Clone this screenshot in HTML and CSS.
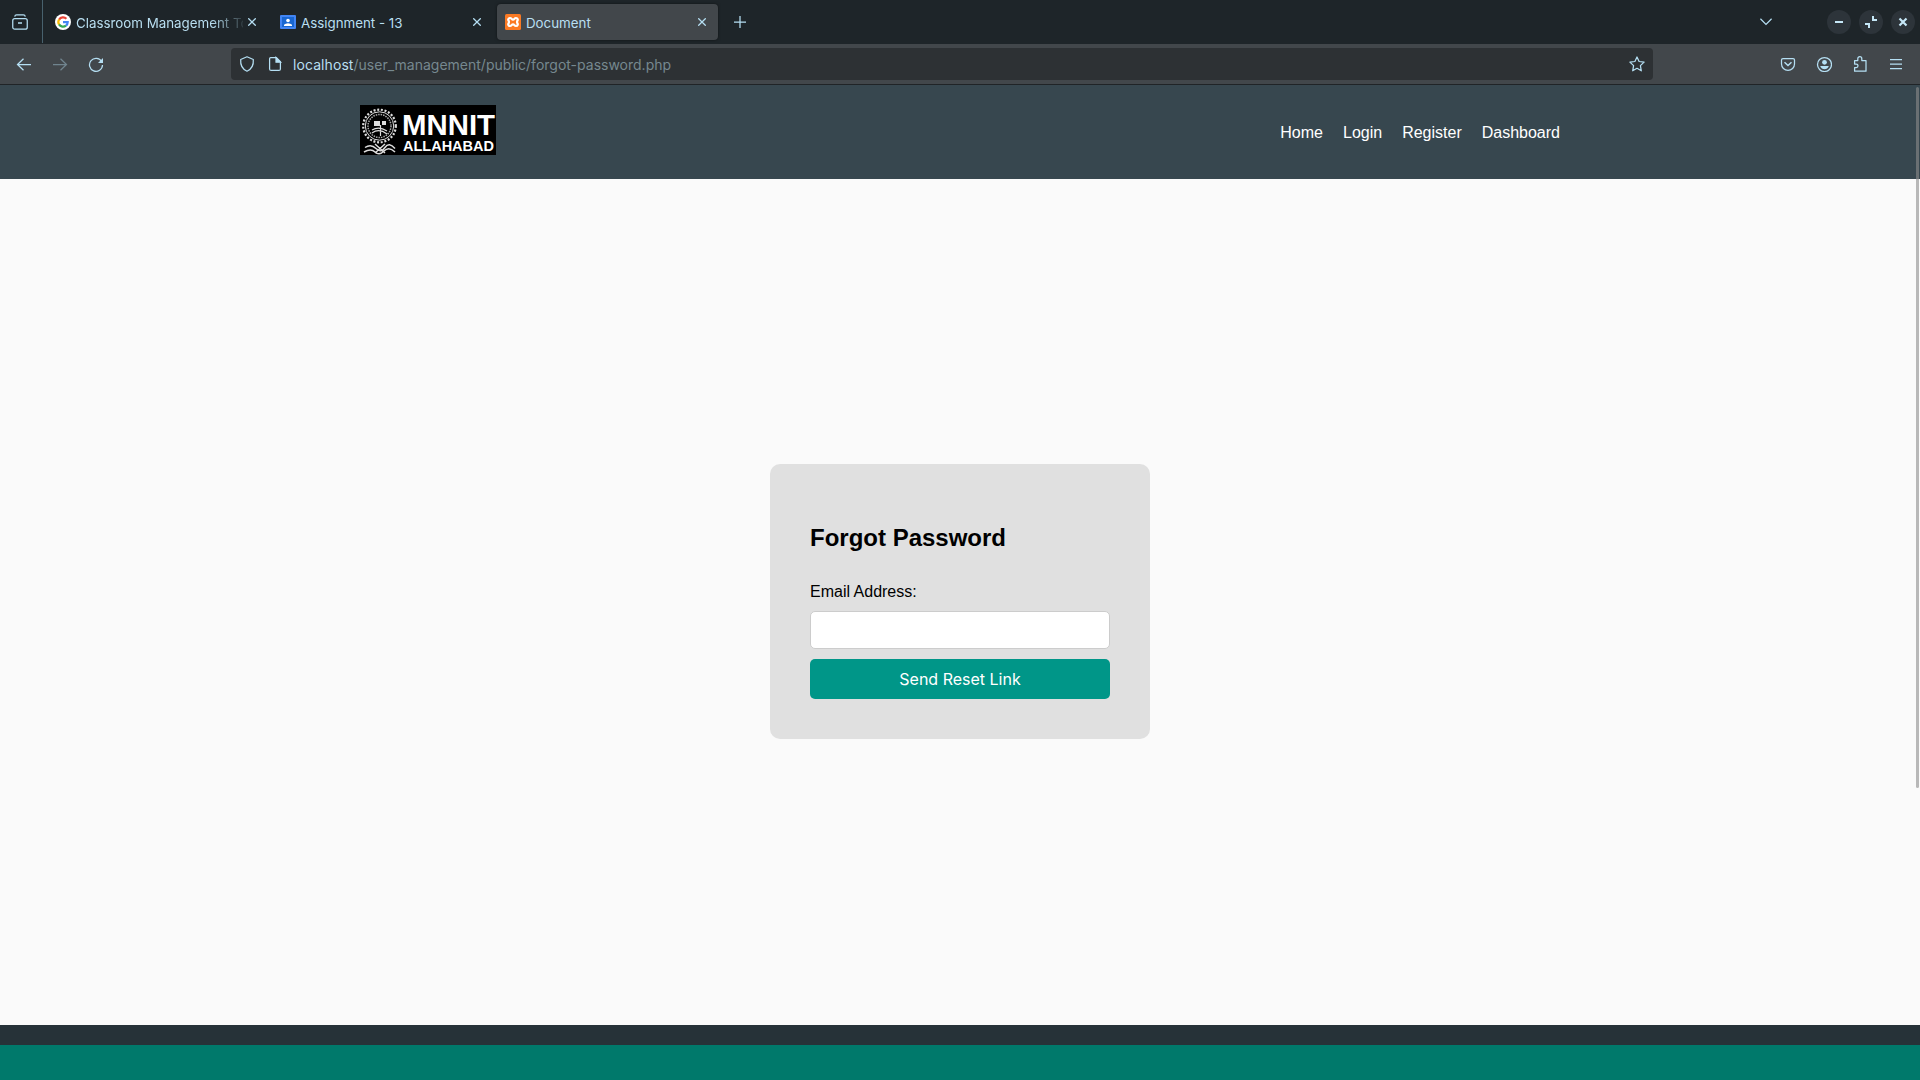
FILE: index.html
```html
<!DOCTYPE html>
<html lang="en">
<head>
<meta charset="utf-8">
<title>Document</title>
<link rel="stylesheet" href="styles.css">
</head>
<body>
<div class="tabbar">
  <div class="view-button">
    <svg class="icon" width="16" height="16" viewBox="0 0 16 16"><path d="M2.700 2.700Q3 .8 4.600.8h6.800Q13 .8 13.300 2.700"/><rect x=".75" y="4.700" width="14.500" height="10.500" rx="2"/><path d="M6 9h4" stroke-width="1.500"/></svg>
  </div>
  <div class="tab">
    <svg width="16" height="16" viewBox="0 0 16 16"><circle cx="8" cy="8" r="8" fill="#fff"/><g fill="none" stroke-width="2.200"><path d="M4.100 5.600A4.700 4.700 0 0 1 11.400 4.800" stroke="#ea4335"/><path d="M4.100 5.500A4.700 4.700 0 0 0 4.100 10.500" stroke="#fbbc05"/><path d="M4 10.400A4.700 4.700 0 0 0 11 11.600" stroke="#34a853"/><path d="M8 8.200h4.700Q12.600 10.400 11 11.700" stroke="#4285f4"/></g></svg>
    <span class="tab-title faded">Classroom Management To</span>
    <svg class="icon close" width="8" height="8" viewBox="0 0 8 8"><path d="M.3.300l7.400 7.400M7.700.3L.3 7.700"/></svg>
  </div>
  <div class="tab">
    <svg width="16" height="16" viewBox="0 0 16 16"><rect y="1" width="16" height="14" rx="1" fill="#4285f4"/><rect x="2" y="3" width="12" height="10" fill="#1967d2"/><circle cx="8" cy="6.500" r="1.800" fill="#fff"/><path d="M4 12v-1.200Q5.500 9.200 8 9.200t4 1.600V12z" fill="#fff"/></svg>
    <span class="tab-title">Assignment - 13</span>
    <svg class="icon close" width="8" height="8" viewBox="0 0 8 8"><path d="M.3.300l7.400 7.400M7.700.3L.3 7.700"/></svg>
  </div>
  <div class="tab active">
    <svg width="16" height="16" viewBox="0 0 16 16"><rect width="16" height="16" rx="1.500" fill="#fb7a24"/><path d="M5 4C3.200 4 2.700 6 3.900 7.200v1.600C2.700 10 3.200 12 5 12S6.500 10.300 8 10.300 9.200 12 11 12s2.300-2 1.100-3.200V7.200C13.300 6 12.800 4 11 4S9.500 5.700 8 5.700 6.800 4 5 4z" fill="none" stroke="#fff" stroke-width="2.200"/></svg>
    <span class="tab-title">Document</span>
    <svg class="icon close" width="8" height="8" viewBox="0 0 8 8"><path d="M.3.300l7.400 7.400M7.700.3L.3 7.700"/></svg>
  </div>
  <svg class="icon new-tab" width="12" height="12" viewBox="0 0 12 12"><path d="M6 0v12M0 6h12"/></svg>
  <div class="window-controls">
    <svg class="icon chevron" width="12" height="8" viewBox="0 0 12 8"><path d="M.4.800L6 6.400 11.600.8"/></svg>
    <span class="control"><svg width="12" height="12" viewBox="0 0 12 12"><path d="M2 5h8v2H2z"/></svg></span>
    <span class="control"><svg width="12" height="12" viewBox="0 0 12 12"><path d="M7 0h2v3h3v2H7zM0 7h5v5H3V9H0z"/></svg></span>
    <span class="control"><svg width="12" height="12" viewBox="0 0 12 12"><path d="M2.500 2.500l7 7M9.500 2.500l-7 7" stroke="#c5e7f7" stroke-width="2.200"/></svg></span>
  </div>
</div>
<div class="toolbar">
  <div class="history">
    <svg class="icon" width="16" height="16" viewBox="0 0 16 16"><path d="M15 8.500H1.500M7.500 2.700L1.500 8.500l6 5.800"/></svg>
    <svg class="icon disabled" width="16" height="16" viewBox="0 0 16 16"><path d="M1 8.500h13.500M8.500 2.700l6 5.800-6 5.800"/></svg>
    <svg class="icon" width="16" height="16" viewBox="0 0 16 16"><path d="M13.600 5.500A6.500 6.500 0 1 0 14.500 9"/><path d="M15 2v5H10z" fill="#b5dff3" stroke="none"/></svg>
  </div>
  <div class="urlbar">
    <svg class="icon" width="16" height="16" viewBox="0 0 16 16"><path d="M8 .8L14.300 3.500C14.700 8.500 12.500 13.200 8 15.200 3.500 13.200 1.300 8.500 1.700 3.500z" stroke-linejoin="round"/></svg>
    <svg class="icon page" width="16" height="16" viewBox="0 0 16 16"><path d="M3.700 1.600h5.600l4.100 4.100v7.200q0 1.500-1.500 1.500H4.100q-1.500 0-1.500-1.500V2.800q0-1.200 1.100-1.200z"/><path d="M9 1.500v4.700h4.600z" fill="#b5dff3"/></svg>
    <span class="url"><b>localhost</b>/user_management/public/forgot-password.php</span>
    <svg class="icon" width="16" height="16" viewBox="0 0 16 16"><path d="M8 1l2.100 4.500 5 .6-3.700 3.500.9 5.200L8 12.300l-4.300 2.500.9-5.200L.9 6.100l5-.6z" stroke-linejoin="round"/></svg>
  </div>
  <div class="actions">
    <svg class="icon" width="16" height="16" viewBox="0 0 16 16"><path d="M3 2.600h10q1.500 0 1.500 1.500V8a6.500 6.300 0 0 1-13 0V4.100q0-1.500 1.500-1.500z"/><path d="M4.500 6.200L8 9.500l3.500-3.300" stroke-width="1.500"/></svg>
    <svg class="icon" width="16" height="16" viewBox="0 0 16 16"><circle cx="8.500" cy="8.500" r="7"/><circle cx="8.500" cy="6.300" r="2.400" fill="#b5dff3" stroke="none"/><path d="M4.200 10h8.600Q11.500 13.300 8.500 13.300T4.200 10z" fill="#b5dff3" stroke="none"/></svg>
    <svg class="icon" width="16" height="16" viewBox="0 0 16 16"><path d="M2.600 8V4.600h3.200V2.700a2 2 0 0 1 4 0v1.900H14v10.600H2.600v-3.600h1.600a1.700 1.700 0 0 0 0-3.600z" stroke-linejoin="round"/></svg>
    <svg class="icon" width="16" height="16" viewBox="0 0 16 16"><path d="M2 3.500h12M2 8h12M2 12.500h12"/></svg>
  </div>
</div>
<div class="page-view">
  <header class="site-header">
    <div class="container">
      <svg class="logo" width="136" height="50" viewBox="0 0 136 50">
        <rect width="136" height="50" fill="#000"/>
        <g fill="none" stroke="#ddd">
          <circle cx="19.500" cy="21" r="16.300" stroke-width="2.200" stroke-dasharray="2 1.700"/>
          <circle cx="19.500" cy="21" r="14.200"/>
          <circle cx="19.500" cy="21" r="11.500" stroke-width="1.500" stroke-dasharray="1.500 1" stroke="#aaa"/>
          <path d="M12 28q7-5 15 1M12 25q7-4 15 1M20.500 20v11" stroke-width="1.200"/>
          <path d="M5 42.500q6-4 11 1t9-1 10 1M4 47q7-4 11 0t9-1 11 1M15 39l10 9M25 39l-10 9" stroke-width="1.500"/>
        </g>
        <path d="M14 16h6v5h-6zM22 16h4v4h-4z" fill="#ddd"/>
        <text x="42" y="30" font-size="29" textLength="93" lengthAdjust="spacingAndGlyphs">MNNIT</text>
        <text x="43" y="45.500" font-size="15" textLength="91" lengthAdjust="spacingAndGlyphs">ALLAHABAD</text>
      </svg>
      <nav><a>Home</a><a>Login</a><a>Register</a><a>Dashboard</a></nav>
    </div>
  </header>
  <main>
    <form class="card">
      <h2>Forgot Password</h2>
      <label for="email">Email Address:</label>
      <input id="email" type="email">
      <button type="button">Send Reset Link</button>
    </form>
  </main>
  <footer><div class="footer-band"></div></footer>
  <div class="scroll-thumb"></div>
</div>
</body>
</html>
```

FILE: styles.css
```css
* { box-sizing: border-box; }
body { margin: 0; height: 1080px; overflow: hidden; display: flex; flex-direction: column; font-family: "Liberation Sans", Arial, sans-serif; }
svg { display: block; flex: none; }
.icon { fill: none; stroke: #b5dff3; stroke-width: 1.25; }
.icon.disabled { opacity: .4; }

.tabbar { height: 44px; flex: none; display: flex; align-items: center; background: #1e2529; font-family: Inter, sans-serif; }
.view-button { width: 43px; height: 43px; align-self: flex-start; padding: 14px 0 0 12px; border-right: 1px solid #48616d; margin-right: 4px; }
.tab { width: 221px; height: 36px; margin-right: 4px; padding: 0 12px 0 8px; display: flex; align-items: center; gap: 5px; border-radius: 4px; }
.tab.active { background: #42474b; box-shadow: 0 0 3px rgba(0,0,0,.5); margin-right: 16px; }
.tab-title { flex: 1; min-width: 0; overflow: hidden; white-space: nowrap; color: #b9dff1; font-size: 13.33px; line-height: 20px; padding-top: 1px; }
.faded { -webkit-mask-image: linear-gradient(to right, #000 135px, transparent 171px); mask-image: linear-gradient(to right, #000 135px, transparent 171px); }
.window-controls { margin-left: auto; display: flex; align-items: center; gap: 8px; padding-right: 5px; }
.chevron { margin-right: 47px; }
.control { width: 24px; height: 24px; border-radius: 50%; background: #2d343a; display: grid; place-items: center; }
.control svg { fill: #c5e7f7; }

.toolbar { height: 41px; flex: none; display: flex; align-items: center; background: #42474b; border-bottom: 1px solid #202427; }
.history { width: 231px; display: flex; gap: 20px; padding-left: 16px; }
.urlbar { width: 1422px; height: 32px; display: flex; align-items: center; padding: 0 8px; border-radius: 4px; background: #2d3134; }
.page { margin-left: 12px; }
.url { flex: 1; margin-left: 10px; padding-top: 2px; font: 14px/22px Inter, sans-serif; color: #76888f; white-space: nowrap; }
.url b { font-weight: 400; color: #b9dff1; letter-spacing: .08px; }
.actions { margin-left: auto; display: flex; gap: 20px; padding-right: 16px; }

.page-view { flex: 1; min-height: 0; display: flex; flex-direction: column; position: relative; background: #fafafa; }
.site-header { height: 94px; flex: none; padding: 20px 0; background: #37474f; }
.container { width: 1200px; margin: 0 auto; display: flex; justify-content: space-between; }
.logo text { fill: #fff; font-family: "Liberation Sans", Arial, sans-serif; font-weight: 700; }
nav { display: flex; gap: 20px; padding-top: 19px; font-size: 16px; line-height: 18px; color: #fff; }
main { flex: 1; display: flex; justify-content: center; align-items: center; padding-bottom: 2px; }
.card { width: 380px; height: 275px; padding: 40px; border-radius: 10px; background: #e0e0e0; display: flex; flex-direction: column; }
h2 { margin: 20px 0; font-size: 24px; line-height: 27px; }
label { font-size: 16px; line-height: 18px; margin-top: 12px; margin-bottom: 10px; }
input { height: 38px; flex: none; width: 100%; margin: 0 0 10px; border: 1px solid #ccc; border-radius: 5px; background: #fff; }
button { height: 40px; flex: none; border: 0; border-radius: 5px; background: #009688; color: #fff; font: 16px Inter, sans-serif; }
footer { height: 55px; flex: none; padding-top: 20px; background: #263238; }
.footer-band { height: 35px; background: #00796b; }
.scroll-thumb { position: absolute; left: 1916px; top: 2px; width: 3px; height: 701px; border-radius: 2px; background: rgba(140,140,140,.6); }
```
